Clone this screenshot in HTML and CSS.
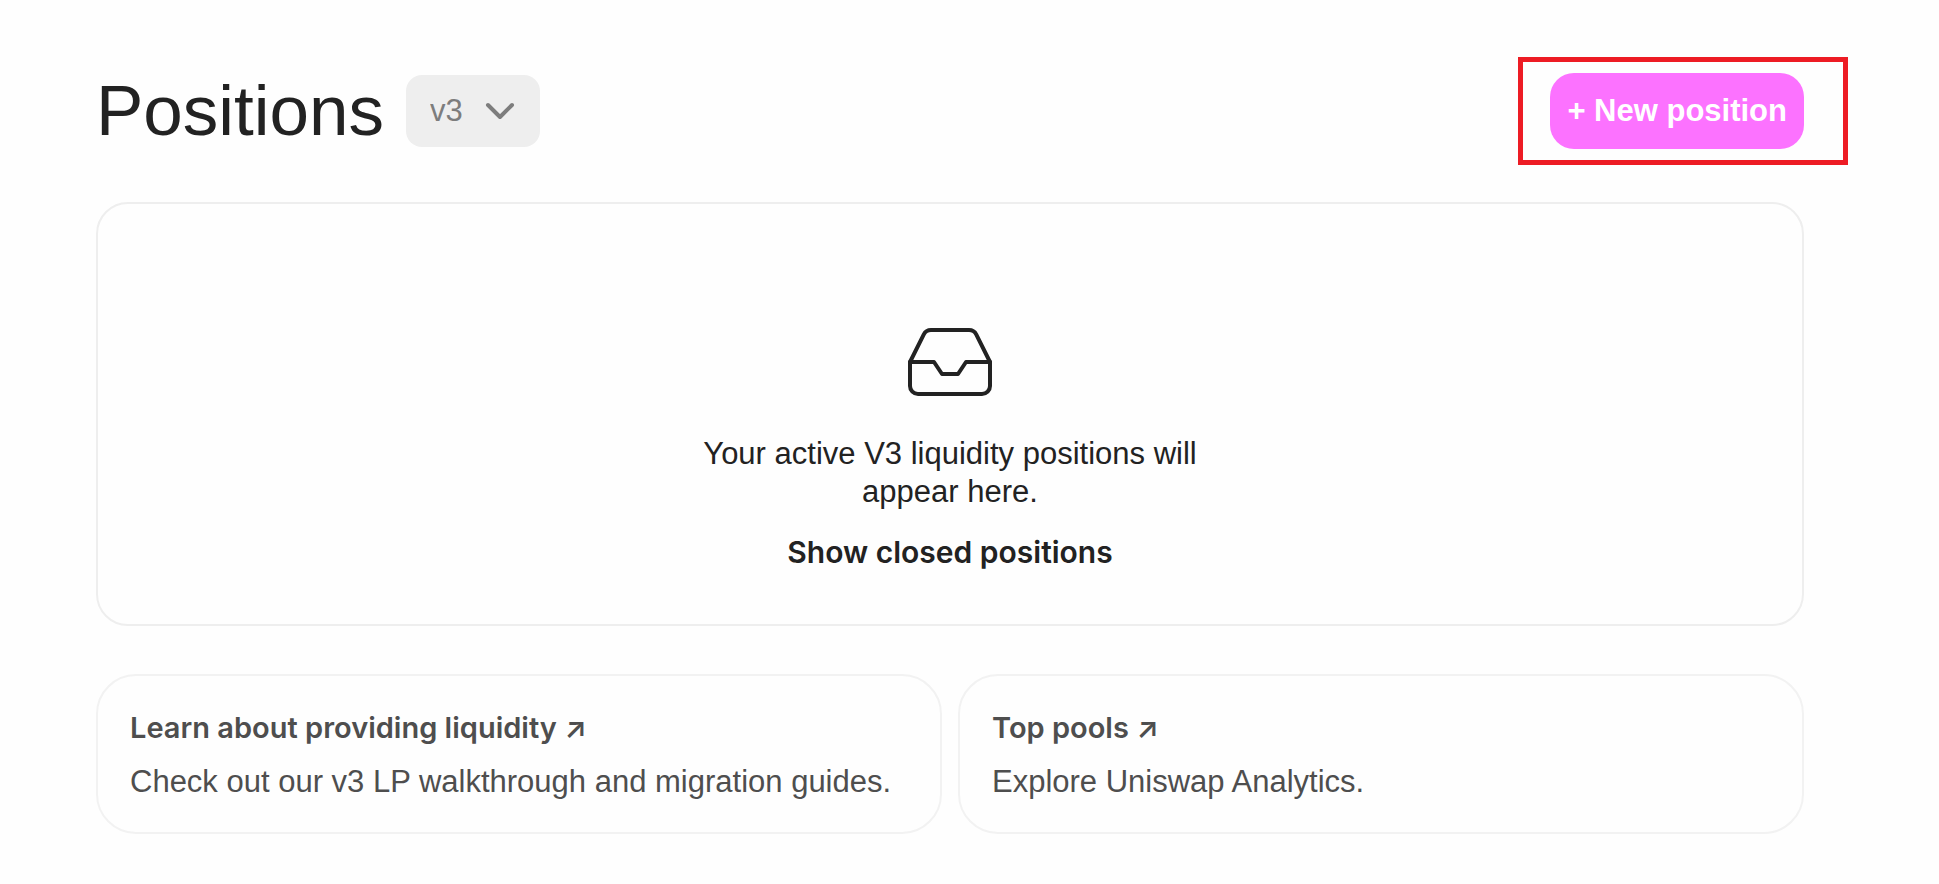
FILE: index.html
```
<!DOCTYPE html>
<html lang="en">
<head>
<meta charset="utf-8">
<meta name="viewport" content="width=device-width, initial-scale=1">
<title>Positions</title>
<link rel="stylesheet" href="styles.css">
</head>
<body>
<main class="page">
  <header class="header">
    <h1 class="title">Positions</h1>
    <div class="version">
      <select class="version-select" aria-label="Protocol version">
        <option selected>v3</option>
      </select>
      <svg class="version-chevron" viewBox="0 0 24 24" aria-hidden="true"><path d="M6 9l6 6 6-6"/></svg>
    </div>
    <div class="highlight">
      <button class="new-position" type="button">+ New position</button>
    </div>
  </header>

  <section class="empty">
    <svg class="inbox" viewBox="0 0 24 24" aria-hidden="true">
      <polyline points="22 12 16 12 14 15 10 15 8 12 2 12"/>
      <path d="M5.45 5.11L2 12v6a2 2 0 0 0 2 2h16a2 2 0 0 0 2-2v-6l-3.45-6.89A2 2 0 0 0 16.76 4H7.24a2 2 0 0 0-1.79 1.11z"/>
    </svg>
    <p class="empty-text">Your active V3 liquidity positions will appear here.</p>
    <button class="show-closed" type="button">Show closed positions</button>
  </section>

  <nav class="links" aria-label="Resources">
    <a class="link-card" href="#learn">
      <span class="link-title">Learn about providing liquidity ↗</span>
      <span class="link-text">Check out our v3 LP walkthrough and migration guides.</span>
    </a>
    <a class="link-card" href="#pools">
      <span class="link-title">Top pools ↗</span>
      <span class="link-text">Explore Uniswap Analytics.</span>
    </a>
  </nav>
</main>
</body>
</html>
```
FILE: styles.css
```
* {
  box-sizing: border-box;
}

body {
  margin: 0;
  background: #fefefe;
  color: #222;
  font: 400 31px/38px "Liberation Sans", Arial, sans-serif;
}

button,
select {
  border: 0;
  font: inherit;
  cursor: pointer;
}

.page {
  padding: 73px 135px 48px 96px;
}

.header {
  display: flex;
  align-items: center;
  margin-bottom: 53px;
}

.title {
  margin: 0 22px 0 0;
  font-size: 71px;
  font-weight: 400;
  line-height: 76px;
}

.version {
  position: relative;
}

.version-select {
  display: block;
  appearance: none;
  width: 134px;
  height: 72px;
  padding: 0 76px 0 24px;
  border-radius: 16px;
  background: #eee;
  color: #7d7d7d;
}

.version-chevron {
  position: absolute;
  top: 12px;
  right: 16px;
  width: 48px;
  height: 48px;
  fill: none;
  stroke: #7d7d7d;
  stroke-width: 2;
  stroke-linecap: round;
  stroke-linejoin: round;
  pointer-events: none;
}

.highlight {
  position: relative;
  margin-left: auto;
}

.highlight::after {
  content: "";
  position: absolute;
  inset: -16px -44px -16px -32px;
  border: 5px solid #ed1c24;
  pointer-events: none;
}

.new-position {
  display: block;
  padding: 19px 17px;
  border-radius: 24px;
  background: #fc72ff;
  color: #fff;
  font-weight: 700;
}

.empty {
  display: flex;
  flex-direction: column;
  align-items: center;
  padding: 110px 32px 42px;
  border: 2px solid #eee;
  border-radius: 32px;
  text-align: center;
}

.inbox {
  width: 96px;
  height: 96px;
  fill: none;
  stroke: #222;
  stroke-width: 1;
  stroke-linecap: round;
  stroke-linejoin: round;
}

.empty-text {
  max-width: 520px;
  margin: 25px 0 11px;
}

.show-closed {
  padding: 11px 24px;
  background: none;
  color: #222;
  font-family: Inter, sans-serif;
  font-size: 30px;
  font-weight: 600;
}

.links {
  display: grid;
  grid-template-columns: 1fr 1fr;
  gap: 16px;
  margin-top: 48px;
}

.link-card {
  display: flex;
  flex-direction: column;
  gap: 16px;
  padding: 33px 32px 31px;
  border: 2px solid #f2f2f2;
  border-radius: 40px;
  color: #4e4e4e;
  text-decoration: none;
}

.link-title {
  font-family: Inter, sans-serif;
  font-size: 29px;
  font-weight: 600;
}
```
